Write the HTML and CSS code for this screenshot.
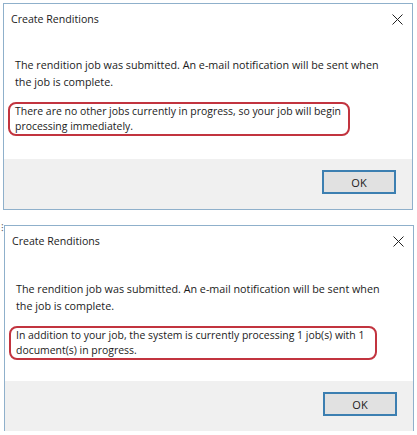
FILE: index.html
```html
<!DOCTYPE html>
<html lang="en">
<head>
    <meta charset="UTF-8">
    <title>Create Renditions</title>
    <link rel="stylesheet" href="styles.css">
</head>
<body>

<!-- First dialog: no other jobs -->
<div class="dialog dialog-first">
    <div class="dialog-title">
        <span>Create Renditions</span>
        <svg class="close" width="11" height="11" viewBox="0 0 11 11">
            <path d="M0.5 0.5 L10.5 10.5 M10.5 0.5 L0.5 10.5" stroke="#222" stroke-width="1" fill="none"/>
        </svg>
    </div>
    <div class="dialog-body">
        <p>The rendition job was submitted. An e-mail notification will be sent when<br>the job is complete.</p>
        <p class="highlight highlight-short">There are no other jobs currently in progress, so your job will begin<br>processing immediately.</p>
    </div>
    <div class="dialog-footer">
        <button class="ok-button">OK</button>
    </div>
</div>

<!-- Second dialog: jobs in progress -->
<div class="dialog dialog-second">
    <span class="cursor-mark">&#8285;</span>
    <div class="dialog-title">
        <span>Create Renditions</span>
        <svg class="close" width="11" height="11" viewBox="0 0 11 11">
            <path d="M0.5 0.5 L10.5 10.5 M10.5 0.5 L0.5 10.5" stroke="#222" stroke-width="1" fill="none"/>
        </svg>
    </div>
    <div class="dialog-body">
        <p>The rendition job was submitted. An e-mail notification will be sent when<br>the job is complete.</p>
        <p class="highlight highlight-long">In addition to your job, the system is currently processing 1 job(s) with 1<br>document(s) in progress.</p>
    </div>
    <div class="dialog-footer">
        <button class="ok-button">OK</button>
    </div>
</div>

</body>
</html>
```

FILE: styles.css
```css
/* Basic styling */
body {
    margin: 0;
    padding-top: 3px;
    background-color: #ffffff;
    font-family: "Segoe UI", "Open Sans", Arial, sans-serif;
    font-size: 10.75px;
    color: #1b1b1b;
}

/* Dialog window */
.dialog {
    position: relative;
    width: 408px;
    border: 1px solid #8fb0cb;
    background-color: #ffffff;
    overflow: hidden;
}

.dialog-first {
    margin-left: 3px;
    height: 205px;
}

.dialog-second {
    margin-left: 4px;
    margin-top: 15px;
    height: 204px;
    overflow: visible;
}

.dialog-title {
    display: flex;
    justify-content: space-between;
    align-items: center;
    height: 30px;
    padding: 0 9px 0 7px;
    font-size: 10.6px;
}

.close {
    display: block;
}

.dialog-body {
    height: 125px;
    padding: 23px 0 0 11px;
    box-sizing: border-box;
}

.dialog-second .dialog-body {
    padding-top: 25px;
}

.dialog-body p {
    margin: 0;
    line-height: 17px;
    white-space: nowrap;
}

/* Red annotation around the status text */
.highlight {
    margin: 11px 0 0 -7px !important;
    padding: 0 0 0 5px;
    border: 2px solid #c2343f;
    border-radius: 8px;
    font-size: 10.45px;
    line-height: 15px !important;
}

.highlight-short {
    width: 333px;
}

.highlight-long {
    width: 359px;
}

/* Footer with button */
.dialog-footer {
    display: flex;
    justify-content: flex-end;
    height: 50px;
    padding: 11px 16px 0 0;
    box-sizing: border-box;
    background-color: #f0f0f0;
}

.ok-button {
    width: 74px;
    height: 24px;
    border: 2px solid #3c7fb1;
    background-color: #e1e1e1;
    font-family: inherit;
    font-size: 11px;
    color: #1b1b1b;
}

.cursor-mark {
    position: absolute;
    left: -4px;
    top: -6px;
    font-size: 10px;
    color: #666666;
}
```
